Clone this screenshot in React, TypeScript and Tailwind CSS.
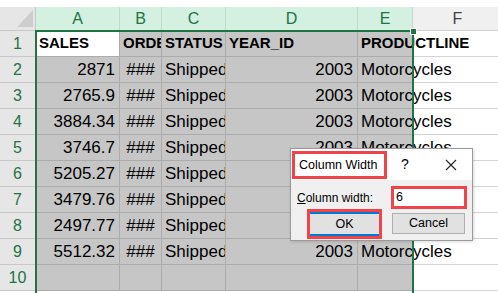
import React from "react";

const colW = [84, 42, 64, 132, 55, 90];
const letters = ["A", "B", "C", "D", "E", "F"];
const sales = ["2871", "2765.9", "3884.34", "3746.7", "5205.27", "3479.76", "2497.77", "5512.32"];

type Cell = { t: string; bold?: boolean; right?: boolean; center?: boolean; overflow?: boolean };

function rowCells(r: number): Cell[] {
  if (r === 1)
    return [
      { t: "SALES", bold: true },
      { t: "ORDERDATE", bold: true },
      { t: "STATUS", bold: true },
      { t: "YEAR_ID", bold: true },
      { t: "PRODUCTLINE", bold: true, overflow: true },
      { t: "" },
    ];
  if (r >= 2 && r <= 9)
    return [
      { t: sales[r - 2], right: true },
      { t: "###", center: true },
      { t: "Shipped" },
      { t: "2003", right: true },
      { t: "Motorcycles", overflow: true },
      { t: "" },
    ];
  return [{ t: "" }, { t: "" }, { t: "" }, { t: "" }, { t: "" }, { t: "" }];
}

export default function App() {
  const rows = [1, 2, 3, 4, 5, 6, 7, 8, 9, 10];
  return (
    <div
      className="relative w-[498px] h-[293px] overflow-hidden bg-white text-black"
      style={{ fontFamily: '"Liberation Sans", Arial, sans-serif' }}
    >
      <div className="h-[7px] bg-white" />
      {/* header row */}
      <div className="flex h-[24px]">
        <div className="relative w-[36px] shrink-0 bg-[#e6e6e6] border-r border-b border-[#c8c8c8]">
          <svg className="absolute left-0 top-0" width="36" height="24" viewBox="0 0 36 24">
            <polygon points="33,3 33,20 17,20" fill="#cdcdcd" />
          </svg>
        </div>
        {letters.map((l, i) => (
          <div
            key={l}
            style={{ width: colW[i] }}
            className={
              i < 5
                ? "shrink-0 flex items-center justify-center bg-[#d3f0e0] text-[#217346] border-r border-b border-[#bcdcc9] text-[16px]"
                : "shrink-0 flex items-center justify-center bg-[#f0f0f0] text-[#444444] border-r border-b border-[#d0d0d0] text-[16px]"
            }
          >
            {l}
          </div>
        ))}
      </div>
      {rows.map((r) => {
        const cells = rowCells(r);
        return (
          <div key={r} className="flex h-[26px]">
            <div className="w-[36px] shrink-0 flex items-center justify-center bg-[#e6e6e6] text-[#217346] text-[16px] border-r border-b border-[#c8c8c8]">
              {r}
            </div>
            {cells.map((c, i) => {
              const selected = i < 5;
              const active = r === 1 && i === 0;
              const bg = active ? "bg-white" : selected ? "bg-[#c6c6c6]" : "bg-transparent";
              const border = selected ? "border-[#ababab]" : "border-[#d4d4d4]";
              return (
                <div
                  key={i}
                  style={{ width: colW[i] }}
                  className={`shrink-0 relative flex items-center border-r border-b ${border} ${bg} ${
                    c.overflow ? "overflow-visible z-10" : "overflow-hidden"
                  } ${c.right ? "justify-end pr-[4px]" : c.center ? "justify-center" : "justify-start pl-[3px]"}`}
                >
                  <span
                    className={`whitespace-nowrap ${c.bold ? "font-bold text-[15px]" : "text-[17px]"}`}
                  >
                    {c.t}
                  </span>
                </div>
              );
            })}
          </div>
        );
      })}

      {/* selection border */}
      <div className="absolute left-[35px] top-[30px] w-[379px] h-[300px] border-2 border-[#217346] z-20 pointer-events-none" />
      <div className="absolute left-[410px] top-[28px] w-[7px] h-[7px] bg-[#217346] border border-white z-30" />

      {/* dialog */}
      <div className="absolute left-[290px] top-[148px] w-[183px] h-[93px] z-40 flex flex-col border border-[#9a9a9a] bg-[#f0f0f0] shadow-[1px_1px_3px_rgba(0,0,0,0.15)]">
        <div className="h-[31px] bg-white flex items-center">
          <div className="ml-[1px] mt-[1px] w-[95px] h-[28px] border-[3px] border-[#f1434a] flex items-center pl-[4px] text-[12.5px] text-black">
            Column Width
          </div>
          <div className="ml-[14px] text-[14px] text-black">?</div>
          <svg className="ml-[36px]" width="12" height="12" viewBox="0 0 12 12">
            <path d="M1 1 L11 11 M11 1 L1 11" stroke="#222" strokeWidth="1.1" />
          </svg>
        </div>
        <div className="flex-1 flex flex-col">
          <div className="flex items-center mt-[6px] h-[23px]">
            <div className="ml-[6px] text-[12px] text-black w-[94px]">
              <span className="underline">C</span>olumn width:
            </div>
            <div className="w-[76px] h-[23px] border-[3px] border-[#f1434a] bg-white flex items-center pl-[2px] text-[12.5px]">
              6
            </div>
          </div>
          <div className="flex items-start mt-[0px]">
            <div className="ml-[16px] w-[75px] h-[30px] border-[3px] border-[#f1434a] flex">
              <div className="flex-1 border-y-2 border-[#0078d7] bg-[#e1e1e1] flex items-center justify-center text-[12.5px]">
                OK
              </div>
            </div>
            <div className="ml-[10px] mt-[4px] w-[73px] h-[21px] border border-[#adadad] bg-[#e1e1e1] flex items-center justify-center text-[12.5px]">
              Cancel
            </div>
          </div>
        </div>
      </div>
    </div>
  );
}
